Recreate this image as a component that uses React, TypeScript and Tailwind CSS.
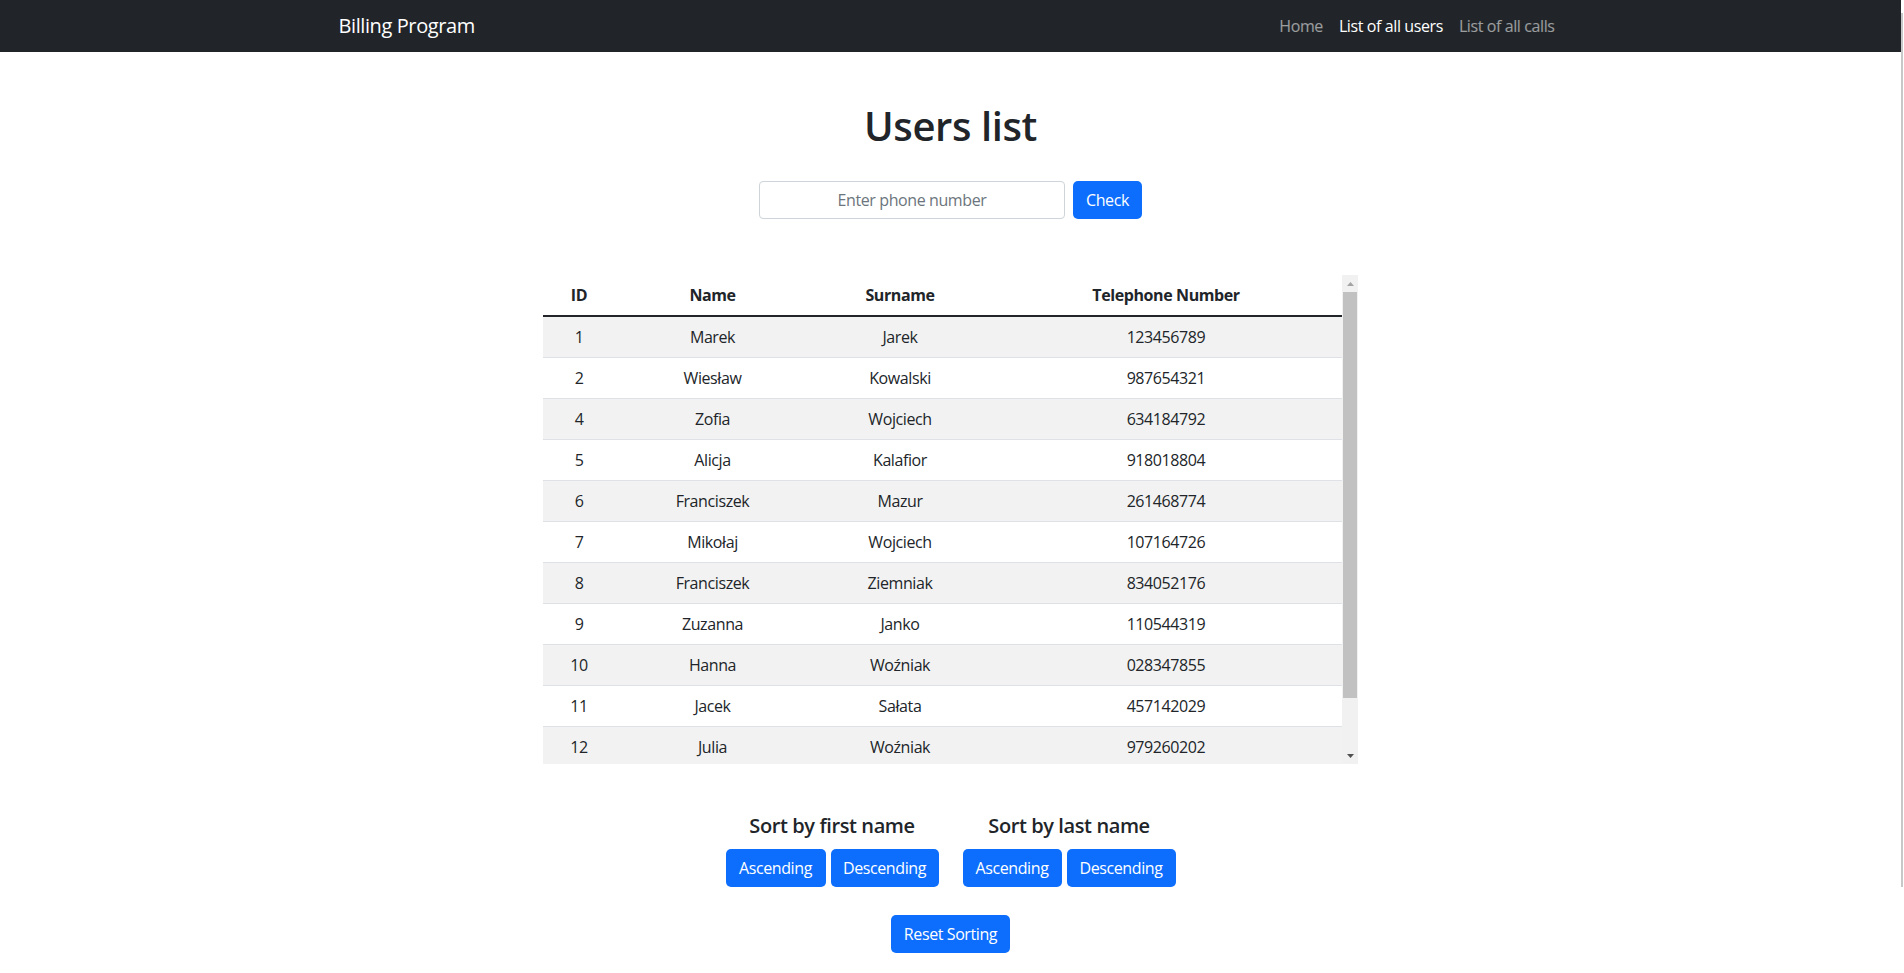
import React from 'react';

type User = { id: number; name: string; surname: string; phone: string };

const users: User[] = [
  { id: 1, name: 'Marek', surname: 'Jarek', phone: '123456789' },
  { id: 2, name: 'Wiesław', surname: 'Kowalski', phone: '987654321' },
  { id: 4, name: 'Zofia', surname: 'Wojciech', phone: '634184792' },
  { id: 5, name: 'Alicja', surname: 'Kalafior', phone: '918018804' },
  { id: 6, name: 'Franciszek', surname: 'Mazur', phone: '261468774' },
  { id: 7, name: 'Mikołaj', surname: 'Wojciech', phone: '107164726' },
  { id: 8, name: 'Franciszek', surname: 'Ziemniak', phone: '834052176' },
  { id: 9, name: 'Zuzanna', surname: 'Janko', phone: '110544319' },
  { id: 10, name: 'Hanna', surname: 'Woźniak', phone: '028347855' },
  { id: 11, name: 'Jacek', surname: 'Sałata', phone: '457142029' },
  { id: 12, name: 'Julia', surname: 'Woźniak', phone: '979260202' },
];

const btn =
  'h-[38px] rounded-[5px] bg-[#0d6efd] text-[16px] leading-6 text-white hover:bg-[#0b5ed7]';

const App: React.FC = () => {
  return (
    <div
      className="flex min-h-screen bg-white tracking-[-0.025em] text-[#212529]"
      style={{ fontFamily: '"Open Sans", "Noto Sans", "Liberation Sans", sans-serif' }}
    >
      <div className="min-w-0 flex-1">
        {/* Navbar */}
        <nav className="h-[52px] bg-[#212529]">
          <div className="mx-auto flex h-full w-[1224px] items-center justify-between">
            <a href="#" className="text-[20px] leading-[30px] text-white">
              Billing Program
            </a>
            <div className="flex items-center text-[16px] leading-6">
              <a href="#" className="px-2 text-white/55">Home</a>
              <a href="#" className="px-2 text-white">List of all users</a>
              <a href="#" className="px-2 text-white/55">List of all calls</a>
            </div>
          </div>
        </nav>

        <main className="flex flex-col items-center">
          <h1 className="mt-[50px] text-[40px] font-semibold leading-[48px]">Users list</h1>

          {/* Phone search */}
          <form className="mt-[31px] flex gap-2" onSubmit={(e) => e.preventDefault()}>
            <input
              type="text"
              placeholder="Enter phone number"
              className="h-[38px] w-[306px] rounded-[4px] border border-[#ced4da] px-3 text-center text-[16px] outline-none placeholder:text-[#6c757d]"
            />
            <button type="submit" className={`${btn} w-[69px]`}>
              Check
            </button>
          </form>

          {/* Users table with scroll */}
          <div className="mt-[56px] flex h-[489px] w-[815px]">
            <div className="min-w-0 flex-1 overflow-hidden">
              <table className="w-full table-fixed border-separate border-spacing-0 text-[16px] leading-6">
                <colgroup>
                  <col className="w-[72px]" />
                  <col className="w-[195px]" />
                  <col className="w-[180px]" />
                  <col />
                </colgroup>
                <thead>
                  <tr>
                    <th className="border-b-2 border-[#212529] px-2 py-2 text-center font-bold">ID</th>
                    <th className="border-b-2 border-[#212529] px-2 py-2 text-center font-bold">Name</th>
                    <th className="border-b-2 border-[#212529] px-2 py-2 text-center font-bold">Surname</th>
                    <th className="border-b-2 border-[#212529] px-2 py-2 text-center font-bold">Telephone Number</th>
                  </tr>
                </thead>
                <tbody>
                  {users.map((u, i) => (
                    <tr key={u.id} className={i % 2 === 0 ? 'bg-[#f2f2f2]' : 'bg-white'}>
                      <td className="border-b border-[#dee2e6] px-2 py-2 text-center">{u.id}</td>
                      <td className="border-b border-[#dee2e6] px-2 py-2 text-center">{u.name}</td>
                      <td className="border-b border-[#dee2e6] px-2 py-2 text-center">{u.surname}</td>
                      <td className="border-b border-[#dee2e6] px-2 py-2 text-center">{u.phone}</td>
                    </tr>
                  ))}
                </tbody>
              </table>
            </div>
            {/* scrollbar */}
            <div className="flex w-[16px] flex-col bg-[#f1f1f1]">
              <div className="flex h-[17px] items-center justify-center">
                <svg width="7" height="4" viewBox="0 0 7 4">
                  <path d="M3.5 0 L7 4 L0 4 Z" fill="#a3a3a3" />
                </svg>
              </div>
              <div className="mx-[1px] h-[406px] bg-[#c1c1c1]" />
              <div className="flex-1" />
              <div className="flex h-[17px] items-center justify-center">
                <svg width="7" height="4" viewBox="0 0 7 4">
                  <path d="M0 0 L7 0 L3.5 4 Z" fill="#505050" />
                </svg>
              </div>
            </div>
          </div>

          {/* Sorting */}
          <div className="mt-[50px] flex gap-6">
            <div className="flex flex-col items-center">
              <h5 className="text-[20px] font-semibold leading-6">Sort by first name</h5>
              <div className="mt-[11px] flex gap-[5px]">
                <button className={`${btn} w-[100px]`}>Ascending</button>
                <button className={`${btn} w-[108px]`}>Descending</button>
              </div>
            </div>
            <div className="flex flex-col items-center">
              <h5 className="text-[20px] font-semibold leading-6">Sort by last name</h5>
              <div className="mt-[11px] flex gap-[5px]">
                <button className={`${btn} w-[99px]`}>Ascending</button>
                <button className={`${btn} w-[109px]`}>Descending</button>
              </div>
            </div>
          </div>

          <button className={`${btn} mt-[28px] w-[119px]`}>Reset Sorting</button>
        </main>
      </div>

      {/* page scrollbar */}
      <div className="flex w-[3px] flex-col">
        <div className="h-[13px]" />
        <div className="h-[874px] w-[2px] bg-[#c8c8c8]" />
      </div>
    </div>
  );
};

export default App;
